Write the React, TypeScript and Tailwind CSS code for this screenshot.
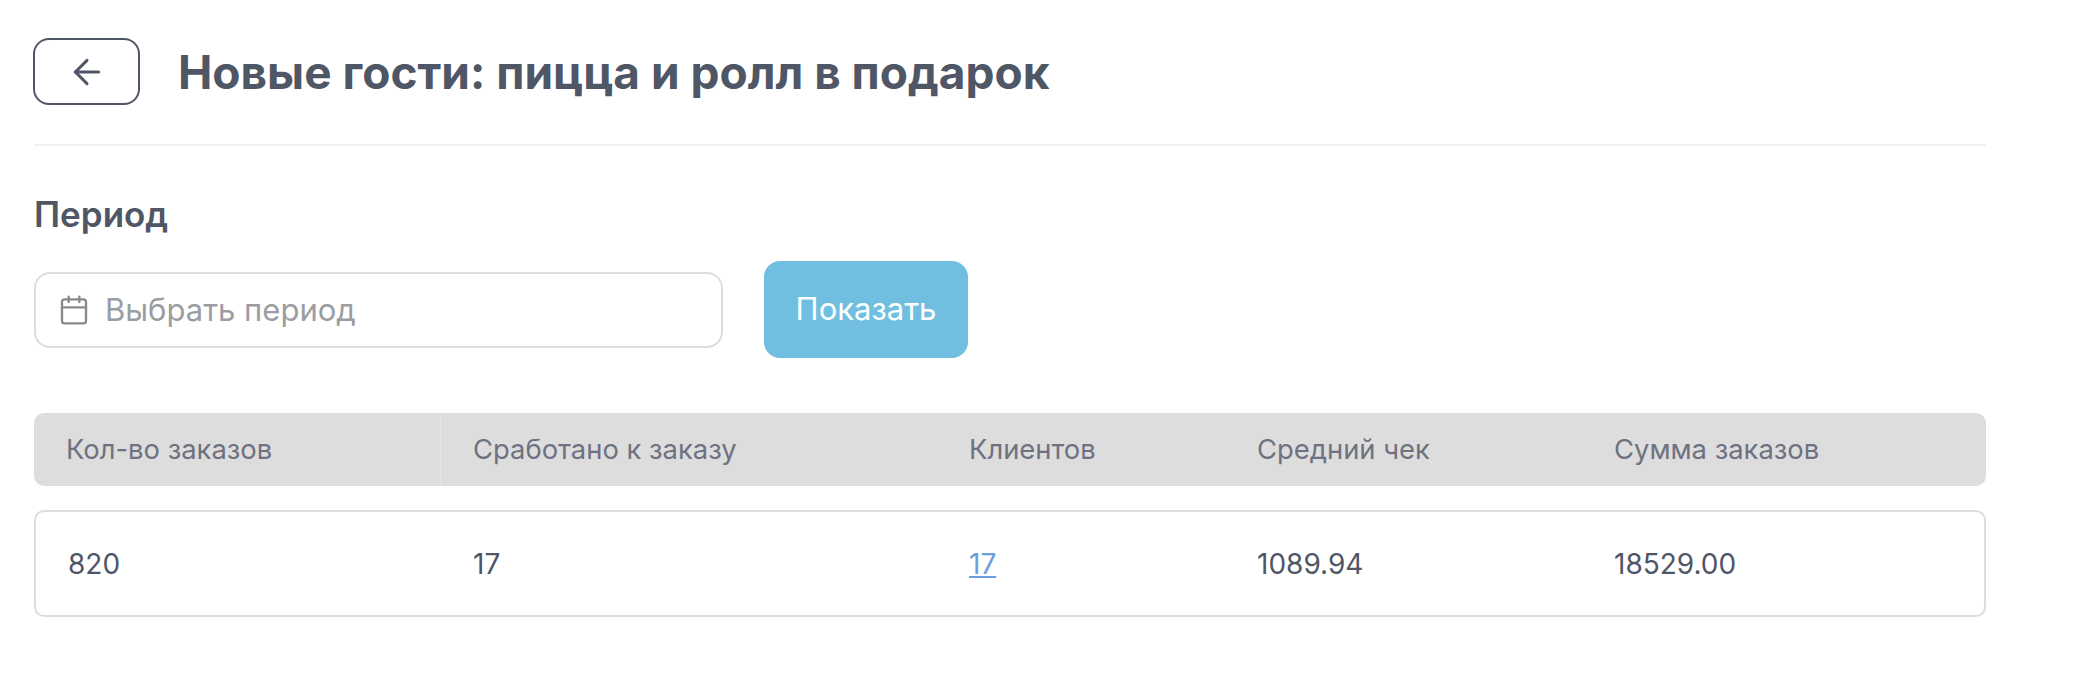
// App.tsx
import React from 'react';
import { ArrowLeft, Calendar } from 'lucide-react';

const columns = 'grid grid-cols-[407px_496px_288px_357px_1fr] items-center';

export default function App() {
  return (
    <div className="min-h-[682px] bg-white pl-[34px] pt-[38px] font-['Inter',sans-serif] text-[#4f5665]">
      <div className="w-[1952px]">
        {/* Header */}
        <div className="flex items-center gap-[38px] border-b-2 border-[#f1f1f1] pb-[39px]">
          <button className="-ml-px flex h-[67px] w-[107px] items-center justify-center rounded-[16px] border-2 border-[#4f5665]">
            <ArrowLeft className="h-[40px] w-[40px]" strokeWidth={1.8} />
          </button>
          <h1 className="text-[46px] font-bold leading-[56px]">Новые гости: пицца и ролл в подарок</h1>
        </div>

        {/* Period */}
        <h2 className="mt-[49px] text-[35px] font-semibold leading-[38px]">Период</h2>
        <div className="mt-[28px] flex items-center gap-[41px]">
          <div className="flex h-[76px] w-[689px] items-center gap-[15px] rounded-[16px] border-2 border-[#dddddd] pl-[22px]">
            <Calendar className="h-[32px] w-[32px] text-[#8a8a8a]" strokeWidth={1.75} />
            <span className="pt-[2px] text-[31px] text-[#9b9da3]">Выбрать период</span>
          </div>
          <button className="h-[97px] w-[204px] rounded-[16px] bg-[#70bfe1] text-[31px] text-white">Показать</button>
        </div>

        {/* Table */}
        <div className={`mt-[55px] h-[73px] rounded-[10px] bg-[#dddddd] text-[27.4px] text-[#6e7280] ${columns}`}>
          <div className="flex h-full items-center border-r border-[#e4e4e4] pl-[32px]">Кол-во заказов</div>
          <div className="pl-[32px]">Сработано к заказу</div>
          <div className="pl-[32px]">Клиентов</div>
          <div className="pl-[32px]">Средний чек</div>
          <div className="pl-[32px]">Сумма заказов</div>
        </div>
        <div className="mt-[24px] h-[107px] rounded-[10px] border-2 border-[#dddddd] text-[28px]">
          <div className={`h-full ${columns}`}>
            <div className="pl-[32px]">820</div>
            <div className="pl-[30px]">17</div>
            <div className="pl-[30px]">
              <a className="text-[#6c9de0] underline" href="#">17</a>
            </div>
            <div className="pl-[30px]">1089.94</div>
            <div className="pl-[30px]">18529.00</div>
          </div>
        </div>
      </div>
    </div>
  );
}
